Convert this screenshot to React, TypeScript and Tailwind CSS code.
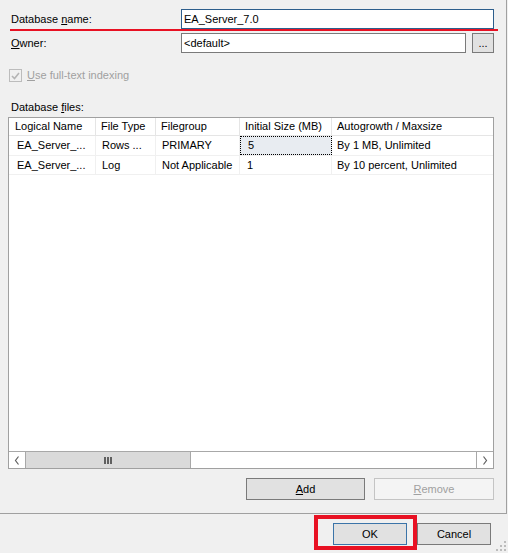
import React from 'react';

const headers = ['Logical Name', 'File Type', 'Filegroup', 'Initial Size (MB)', 'Autogrowth / Maxsize'];

const files = [
  ['EA_Server_...', 'Rows ...', 'PRIMARY', '5', 'By 1 MB, Unlimited'],
  ['EA_Server_...', 'Log', 'Not Applicable', '1', 'By 10 percent, Unlimited'],
];

const cellPad = ['pl-[8px]', 'pl-[6px]', 'pl-[6px]', 'pl-[7px]', 'pl-[5px]'];

function Chevron({ dir }: { dir: 'left' | 'right' }) {
  return (
    <svg width="6" height="9" viewBox="0 0 6 9" className="block">
      <path
        d={dir === 'left' ? 'M4.5 0.5 L1.5 4.5 L4.5 8.5' : 'M1.5 0.5 L4.5 4.5 L1.5 8.5'}
        fill="none"
        stroke="#606060"
        strokeWidth="1.2"
      />
    </svg>
  );
}

function SizeGrip() {
  const dots = [
    [9, 1],
    [5, 5],
    [9, 5],
    [1, 9],
    [5, 9],
    [9, 9],
  ];
  return (
    <svg width="12" height="12" viewBox="0 0 12 12" className="absolute right-[1px] bottom-[1px]">
      {dots.map(([x, y]) => (
        <rect key={`${x}-${y}`} x={x} y={y} width="2" height="2" fill="#bcbcbc" />
      ))}
    </svg>
  );
}

export default function App() {
  return (
    <div className="relative h-[553px] w-[508px] overflow-hidden bg-[#f0f0f0] font-['Liberation_Sans',Arial,sans-serif] text-[11px] text-black">
      {/* Main panel */}
      <div className="flex h-[514px] w-[507px] flex-col border-r border-b border-[#a0a0a0] pt-[9px]">
        {/* Database name */}
        <div className="flex h-[20px] items-center">
          <span className="w-[181px] pl-[11px]">
            Database <u>n</u>ame:
          </span>
          <div className="flex h-[20px] w-[313px] items-center border border-[#2d5e8c] bg-white pl-[2px]">
            EA_Server_7.0
          </div>
        </div>
        <div className="ml-[10px] h-[2px] w-[488px] bg-[#e81123]" />

        {/* Owner */}
        <div className="mt-[2px] flex h-[20px] items-center">
          <span className="w-[181px] pl-[11px]">
            <u>O</u>wner:
          </span>
          <div className="flex h-[20px] w-[285px] items-center border border-[#7a7a7a] bg-white pl-[2px]">
            &lt;default&gt;
          </div>
          <div className="ml-[6px] flex h-[20px] w-[22px] items-end justify-center border border-[#7a7a7a] bg-[#e1e1e1] pb-[3px] leading-none">
            ...
          </div>
        </div>

        {/* Full-text indexing */}
        <div className="mt-[16px] flex h-[13px] items-center pl-[9px]">
          <div className="flex h-[13px] w-[13px] items-center justify-center border border-[#bcbcbc] bg-[#f0f0f0]">
            <svg width="9" height="8" viewBox="0 0 9 8">
              <path d="M1 4 L3.5 6.5 L8 1" fill="none" stroke="#b4b4b4" strokeWidth="1.6" />
            </svg>
          </div>
          <span className="ml-[5px] text-[#a0a0a0]">
            <u>U</u>se full-text indexing
          </span>
        </div>

        {/* Database files */}
        <div className="mt-[18px] h-[14px] pl-[11px] leading-[14px]">
          Database <u>f</u>iles:
        </div>

        <div className="mt-[3px] ml-[8px] flex h-[352px] w-[486px] flex-col border border-[#a0a0a0] bg-white">
          <div className="grid h-[18px] grid-cols-[87px_60px_84px_92px_1fr] border-b border-[#e5e5e5]">
            {headers.map((h, i) => (
              <div
                key={h}
                className={`flex items-center whitespace-nowrap ${i === 0 ? 'pl-[6px]' : 'pl-[5px]'} ${
                  i < headers.length - 1 ? 'border-r border-[#e5e5e5]' : ''
                }`}
              >
                {h}
              </div>
            ))}
          </div>

          {files.map((row, r) => (
            <div
              key={r}
              className={`grid grid-cols-[87px_60px_84px_92px_1fr] border-b border-[#f0f0f0] ${
                r === 0 ? 'h-[20px]' : 'h-[19px]'
              }`}
            >
              {row.map((cell, c) => {
                const focused = r === 0 && c === 3;
                return (
                  <div
                    key={c}
                    className={`flex items-center whitespace-nowrap ${cellPad[c]} ${
                      focused
                        ? 'border border-dotted border-black bg-[#e8ecf1]'
                        : c < row.length - 1
                          ? 'border-r border-[#f0f0f0]'
                          : ''
                    }`}
                  >
                    {cell}
                  </div>
                );
              })}
            </div>
          ))}

          <div className="flex-1" />

          {/* Horizontal scrollbar */}
          <div className="flex h-[17px] border-t border-[#a8a8a8]">
            <div className="flex w-[17px] items-center justify-center border-r border-[#a8a8a8] bg-white">
              <Chevron dir="left" />
            </div>
            <div className="flex w-[165px] items-center justify-center gap-[1px] border-r border-[#a8a8a8] bg-[#dadada]">
              <div className="h-[7px] w-[2px] bg-[#606060]" />
              <div className="h-[7px] w-[2px] bg-[#606060]" />
              <div className="h-[7px] w-[2px] bg-[#606060]" />
            </div>
            <div className="flex-1 bg-white" />
            <div className="flex w-[17px] items-center justify-center border-l border-[#a8a8a8] bg-white">
              <Chevron dir="right" />
            </div>
          </div>
        </div>

        {/* Add / Remove */}
        <div className="mt-[9px] flex justify-end gap-[9px] pr-[12px]">
          <div className="flex h-[22px] w-[119px] items-center justify-center border border-[#7a7a7a] bg-[#e1e1e1]">
            <span>
              <u>A</u>dd
            </span>
          </div>
          <div className="flex h-[22px] w-[120px] items-center justify-center border border-[#c4c4c4] bg-[#f4f4f4] text-[#a0a0a0]">
            <span>
              <u>R</u>emove
            </span>
          </div>
        </div>
      </div>

      {/* Dialog buttons */}
      <div className="flex h-[39px] items-start justify-end pt-[1px] pr-[17px]">
        <div className="border-4 border-[#e81123] pt-[4px] pr-[6px] pb-[1px] pl-[15px]">
          <div className="flex h-[22px] w-[74px] items-center justify-center border border-[#3b74a8] bg-[#e1e1e1]">
            OK
          </div>
        </div>
        <div className="mt-[8px] flex h-[22px] w-[74px] items-center justify-center border border-[#7a7a7a] bg-[#e1e1e1]">
          Cancel
        </div>
      </div>

      <SizeGrip />
    </div>
  );
}
